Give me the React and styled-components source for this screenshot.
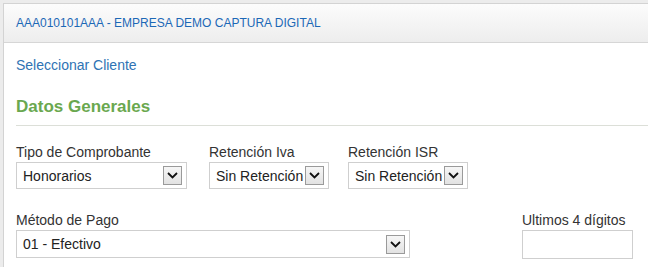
import React from "react";
import styled, { createGlobalStyle } from "styled-components";

const GlobalStyle = createGlobalStyle`
  html, body {
    margin: 0;
    padding: 0;
    background: #ececec;
    font-family: "Liberation Sans", Arial, sans-serif;
  }
`;

const Page = styled.div`
  padding: 3px 0 0 3px;
  height: 264px;
  overflow: hidden;
`;

const Panel = styled.div`
  background: #fff;
  border-top: 1px solid #d3d3d3;
  border-left: 1px solid #d3d3d3;
  height: 100%;
`;

const Heading = styled.div`
  height: 38px;
  line-height: 38px;
  padding: 0 12px;
  font-size: 12px;
  color: #1c68b6;
  background: linear-gradient(#fcfcfc, #ededed);
  border-bottom: 1px solid #d6d6d6;
`;

const Body = styled.div`
  padding: 12px 0 0 12px;
`;

const Link = styled.a`
  display: block;
  font-size: 14px;
  line-height: 20px;
  color: #2f73b4;
  text-decoration: none;
`;

const SectionTitle = styled.h3`
  margin: 20px 0 0;
  padding-bottom: 6px;
  font-size: 17px;
  line-height: 24px;
  font-weight: bold;
  color: #6aa84f;
  border-bottom: 1px solid #dcdfd8;
`;

const Row = styled.div`
  display: grid;
  grid-template-columns: ${(p) => p.$cols};
  margin-top: ${(p) => p.$top}px;
`;

const Field = styled.div`
  display: flex;
  flex-direction: column;
`;

const Label = styled.label`
  font-size: 14px;
  line-height: 16px;
  color: #333;
  margin-bottom: 2px;
`;

const SelectBox = styled.div`
  box-sizing: border-box;
  width: ${(p) => p.$w}px;
  height: ${(p) => p.$h}px;
  border: 1px solid #cfcfcf;
  display: flex;
  align-items: center;
  justify-content: space-between;
  padding: 0 4px 0 6px;
  font-size: 14px;
  color: #222;
  background: #fff;
  white-space: nowrap;
  overflow: hidden;
`;

const Arrow = styled.span`
  box-sizing: border-box;
  flex: none;
  width: 19px;
  height: 19px;
  border: 1px solid #9a9a9a;
  background: linear-gradient(#f6f6f6, #e2e2e2);
  display: flex;
  align-items: center;
  justify-content: center;
`;

const TextInput = styled.div`
  box-sizing: border-box;
  width: 111px;
  height: 29px;
  border: 1px solid #cfcfcf;
  background: #fff;
`;

const Select = ({ value, w, h = 27 }) => (
  <SelectBox $w={w} $h={h}>
    <span>{value}</span>
    <Arrow>
      <svg width="11" height="7" viewBox="0 0 11 7">
        <path d="M1 1 L5.5 5.5 L10 1" fill="none" stroke="#111" strokeWidth="1.8" />
      </svg>
    </Arrow>
  </SelectBox>
);

export default function App() {
  return (
    <Page>
      <GlobalStyle />
      <Panel>
        <Heading>AAA010101AAA - EMPRESA DEMO CAPTURA DIGITAL</Heading>
        <Body>
          <Link href="#">Seleccionar Cliente</Link>
          <SectionTitle>Datos Generales</SectionTitle>
          <Row $cols="193px 139px 1fr" $top={18}>
            <Field>
              <Label>Tipo de Comprobante</Label>
              <Select value="Honorarios" w={171} />
            </Field>
            <Field>
              <Label>Retención Iva</Label>
              <Select value="Sin Retención" w={120} />
            </Field>
            <Field>
              <Label>Retención ISR</Label>
              <Select value="Sin Retención" w={120} />
            </Field>
          </Row>
          <Row $cols="506px 1fr" $top={23}>
            <Field>
              <Label>Método de Pago</Label>
              <Select value="01 - Efectivo" w={394} h={28} />
            </Field>
            <Field>
              <Label>Ultimos 4 dígitos</Label>
              <TextInput />
            </Field>
          </Row>
        </Body>
      </Panel>
    </Page>
  );
}
